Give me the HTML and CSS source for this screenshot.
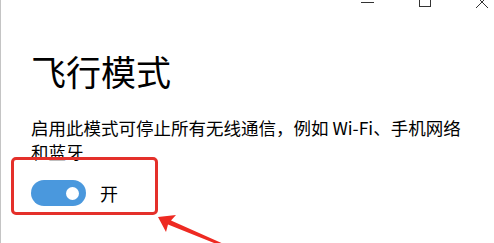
FILE: index.html
```html
<!DOCTYPE html>
<html lang="zh-CN">

<head>
  <meta charset="UTF-8">
  <meta name="viewport" content="width=device-width, initial-scale=1.0">
  <title>飞行模式</title>
  <link rel="stylesheet" href="styles.css">
</head>

<body>
  <div class="window">
    <!-- 窗口按钮 -->
    <div class="titlebar">
      <svg class="ctrl" width="13" height="9" viewBox="0 0 13 9">
        <line x1="0" y1="2.5" x2="13" y2="2.5" stroke="#333" stroke-width="1" />
      </svg>
      <svg class="ctrl" width="13" height="9" viewBox="0 0 13 9">
        <rect x="1.5" y="-5.5" width="11" height="12" fill="none" stroke="#333" stroke-width="1" />
      </svg>
      <svg class="ctrl" width="13" height="9" viewBox="0 0 13 9">
        <line x1="1" y1="-4" x2="13" y2="8" stroke="#333" stroke-width="1" />
        <line x1="13" y1="-4" x2="1" y2="8" stroke="#333" stroke-width="1" />
      </svg>
    </div>

    <div class="content">
      <h1 class="title">飞行模式</h1>
      <p class="desc">启用此模式可停止所有无线通信，例如 Wi-Fi、手机网络和蓝牙</p>
      <div class="toggle-row">
        <span class="toggle on"><span class="knob"></span></span>
        <span class="state">开</span>
      </div>
    </div>

    <!-- 标注 -->
    <div class="mark"></div>
    <svg class="arrow" width="90" height="40" viewBox="0 0 90 40">
      <polygon points="7,12 25,10 20,15.5 75,40 68,40 17,19.5 15,27" fill="#ee2a22" />
    </svg>
  </div>
</body>

</html>
```

FILE: styles.css
```css
html,
body {
  margin: 0;
  padding: 0;
  background: #fff;
}

body {
  font-family: "Noto Sans CJK SC", "Noto Sans", sans-serif;
  color: #000;
}

.window {
  position: relative;
  height: 243px;
  border-left: 1px solid #c4c4c4;
  overflow: hidden;
}

.titlebar {
  display: flex;
  justify-content: flex-end;
  align-items: flex-start;
  gap: 44px;
  height: 9px;
  padding-right: 6px;
}

.ctrl {
  display: block;
}

.content {
  padding-left: 30px;
}

.title {
  margin: 0;
  padding-top: 38px;
  font-size: 35px;
  font-weight: normal;
  line-height: 48px;
}

.desc {
  margin: 21px 0 0;
  max-width: 440px;
  font-size: 17.5px;
  line-height: 24px;
}

.toggle-row {
  display: flex;
  align-items: center;
  gap: 14px;
  margin-top: 16px;
}

.toggle {
  display: flex;
  align-items: center;
  justify-content: flex-end;
  box-sizing: border-box;
  width: 55px;
  height: 26px;
  padding-right: 7px;
  border-radius: 13px;
  background: #4a98dd;
}

.knob {
  width: 13px;
  height: 13px;
  border-radius: 50%;
  background: #fff;
}

.state {
  font-size: 18px;
  line-height: 24px;
}

.mark {
  position: absolute;
  left: 10px;
  top: 157px;
  box-sizing: border-box;
  width: 147px;
  height: 58px;
  border: 3.5px solid #e4302a;
  border-radius: 5px;
}

.arrow {
  position: absolute;
  left: 150px;
  top: 205px;
}
```
